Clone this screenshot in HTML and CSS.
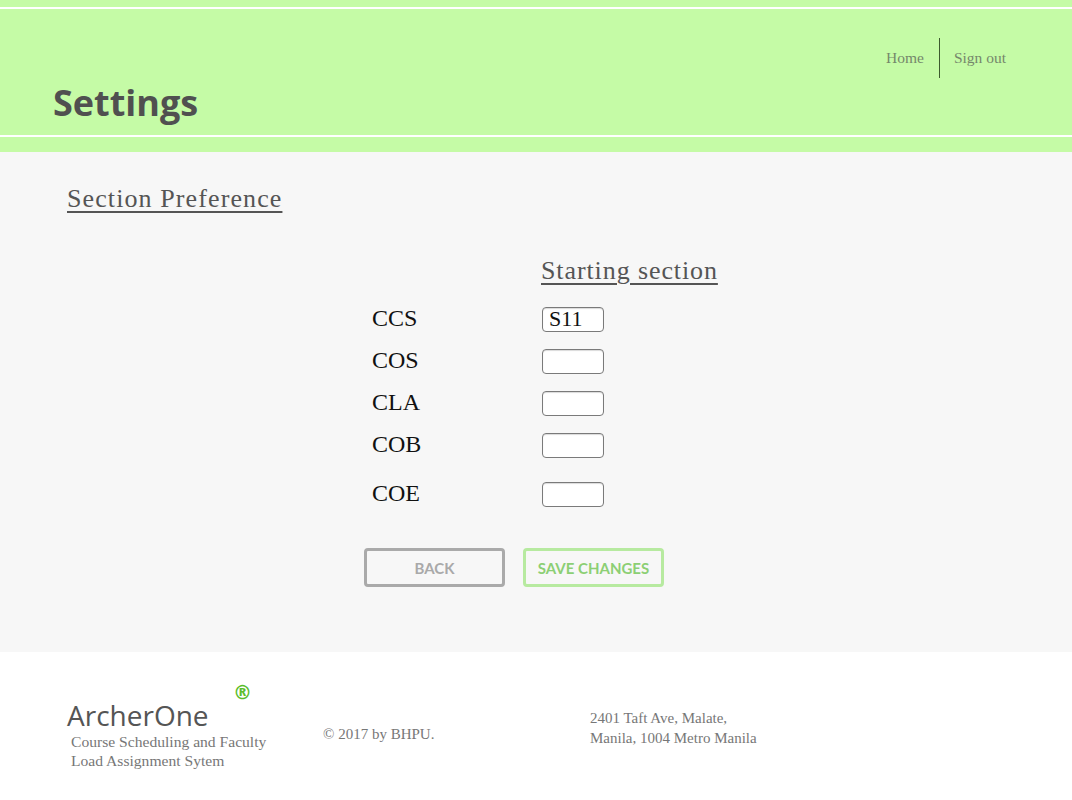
FILE: index.html
```html
<!DOCTYPE html>
<html lang="en">
<head>
<meta charset="utf-8">
<title>Settings</title>
<link rel="stylesheet" href="styles.css">
</head>
<body>
<header class="site-header">
  <div class="header-inner">
    <nav class="top-nav">
      <a class="nav-link" href="#">Home</a>
      <span class="nav-divider"></span>
      <a class="nav-link" href="#">Sign out</a>
    </nav>
    <h1 class="page-title">Settings</h1>
  </div>
</header>

<main class="content">
  <h2 class="section-title">Section Preference</h2>
  <form class="pref-form">
    <div class="col-heading">Starting section</div>
    <div class="pref-rows">
      <div class="pref-row"><label class="pref-label">CCS</label><input class="pref-input" type="text" value="S11"></div>
      <div class="pref-row"><label class="pref-label">COS</label><input class="pref-input" type="text"></div>
      <div class="pref-row"><label class="pref-label">CLA</label><input class="pref-input" type="text"></div>
      <div class="pref-row"><label class="pref-label">COB</label><input class="pref-input" type="text"></div>
      <div class="pref-row pref-row-last"><label class="pref-label">COE</label><input class="pref-input" type="text"></div>
    </div>
    <div class="actions">
      <button type="button" class="btn btn-back">BACK</button>
      <button type="button" class="btn btn-save">SAVE CHANGES</button>
    </div>
  </form>
</main>

<footer class="site-footer">
  <div class="foot-brand">
    <div class="brand-name">ArcherOne<span class="brand-reg">®</span></div>
    <div class="brand-sub">Course Scheduling and Faculty<br>Load Assignment Sytem</div>
  </div>
  <div class="foot-copy">© 2017 by BHPU.</div>
  <div class="foot-address">2401 Taft Ave, Malate,<br>Manila, 1004 Metro Manila</div>
</footer>
</body>
</html>
```

FILE: styles.css
```css
html, body {
  margin: 0;
  padding: 0;
  background: #ffffff;
}

body {
  font-family: "Liberation Serif", serif;
  color: #111;
}

/* Header */
.site-header {
  background: #c5fba6;
  padding: 7px 0 15px;
}

.header-inner {
  height: 126px;
  border-top: 2px solid #ffffff;
  border-bottom: 2px solid #ffffff;
  display: flex;
  flex-direction: column;
}

.top-nav {
  display: flex;
  justify-content: flex-end;
  align-items: center;
  height: 40px;
  margin-top: 29px;
  padding-right: 66px;
}

.nav-link {
  font-family: "Liberation Serif", serif;
  font-size: 15.5px;
  color: #75876b;
  text-decoration: none;
}

.nav-divider {
  width: 1px;
  height: 40px;
  background: #3d5a2e;
  margin: 0 14px 0 15px;
}

.page-title {
  margin: 2px 0 0 53px;
  font-family: "Open Sans", sans-serif;
  font-weight: 700;
  font-size: 36px;
  line-height: 45px;
  color: #505050;
}

/* Main */
.content {
  background: #f7f7f7;
  padding: 32px 0 65px 67px;
}

.section-title {
  margin: 0;
  font-family: "Liberation Serif", serif;
  font-weight: 400;
  font-size: 26px;
  line-height: 30px;
  letter-spacing: 1.1px;
  color: #555;
  text-decoration: underline;
  text-underline-offset: 4px;
  text-decoration-thickness: 2px;
  display: inline-block;
}

.pref-form {
  margin: 42px 0 0 297px;
}

.col-heading {
  margin-left: 177px;
  font-size: 26px;
  line-height: 30px;
  letter-spacing: 0.9px;
  color: #555;
  text-decoration: underline;
  text-underline-offset: 4px;
  text-decoration-thickness: 2px;
}

.pref-rows {
  margin-top: 18px;
  display: flex;
  flex-direction: column;
  gap: 15px;
}

.pref-row {
  display: flex;
  align-items: baseline;
  height: 27px;
}

.pref-row-last {
  margin-top: 7px;
}

.pref-label {
  width: 170px;
  padding-left: 8px;
  font-size: 24px;
  line-height: 28px;
  color: #111;
}

.pref-input {
  box-sizing: border-box;
  width: 62px;
  height: 25px;
  margin: 0;
  padding: 0 6px;
  border: 1px solid #7a7a7a;
  border-radius: 4px;
  background: #fff;
  box-shadow: inset 0 1px 1px rgba(0, 0, 0, 0.15);
  font-family: "Liberation Serif", serif;
  font-size: 22px;
  color: #111;
}

.actions {
  display: flex;
  gap: 18px;
  margin-top: 42px;
}

.btn {
  box-sizing: border-box;
  width: 141px;
  height: 39px;
  border-radius: 4px;
  background: transparent;
  font-family: Lato, sans-serif;
  font-weight: 700;
  font-size: 15px;
  padding: 0;
}

.btn-back {
  border: 3px solid #aaaaaa;
  color: #a9a9a9;
}

.btn-save {
  border: 3px solid #b7eaa0;
  color: #8ccf74;
}

/* Footer */
.site-footer {
  display: flex;
  align-items: flex-start;
  padding-left: 67px;
  height: 148px;
  background: #fff;
}

.foot-brand {
  width: 256px;
  padding-top: 46px;
}

.brand-name {
  position: relative;
  font-family: "Open Sans", sans-serif;
  font-size: 28px;
  line-height: 34px;
  color: #555;
}

.brand-reg {
  position: absolute;
  left: 166px;
  top: -18px;
  font-family: "DejaVu Sans", sans-serif;
  font-weight: 700;
  font-size: 19px;
  line-height: 24px;
  color: #5bbd2c;
}

.brand-sub {
  margin-left: 4px;
  font-size: 15.6px;
  line-height: 19px;
  color: #777;
}

.foot-copy {
  width: 267px;
  padding-top: 73px;
  font-size: 15px;
  line-height: 19px;
  color: #777;
}

.foot-address {
  padding-top: 56px;
  font-size: 15px;
  line-height: 20px;
  color: #777;
}
```
